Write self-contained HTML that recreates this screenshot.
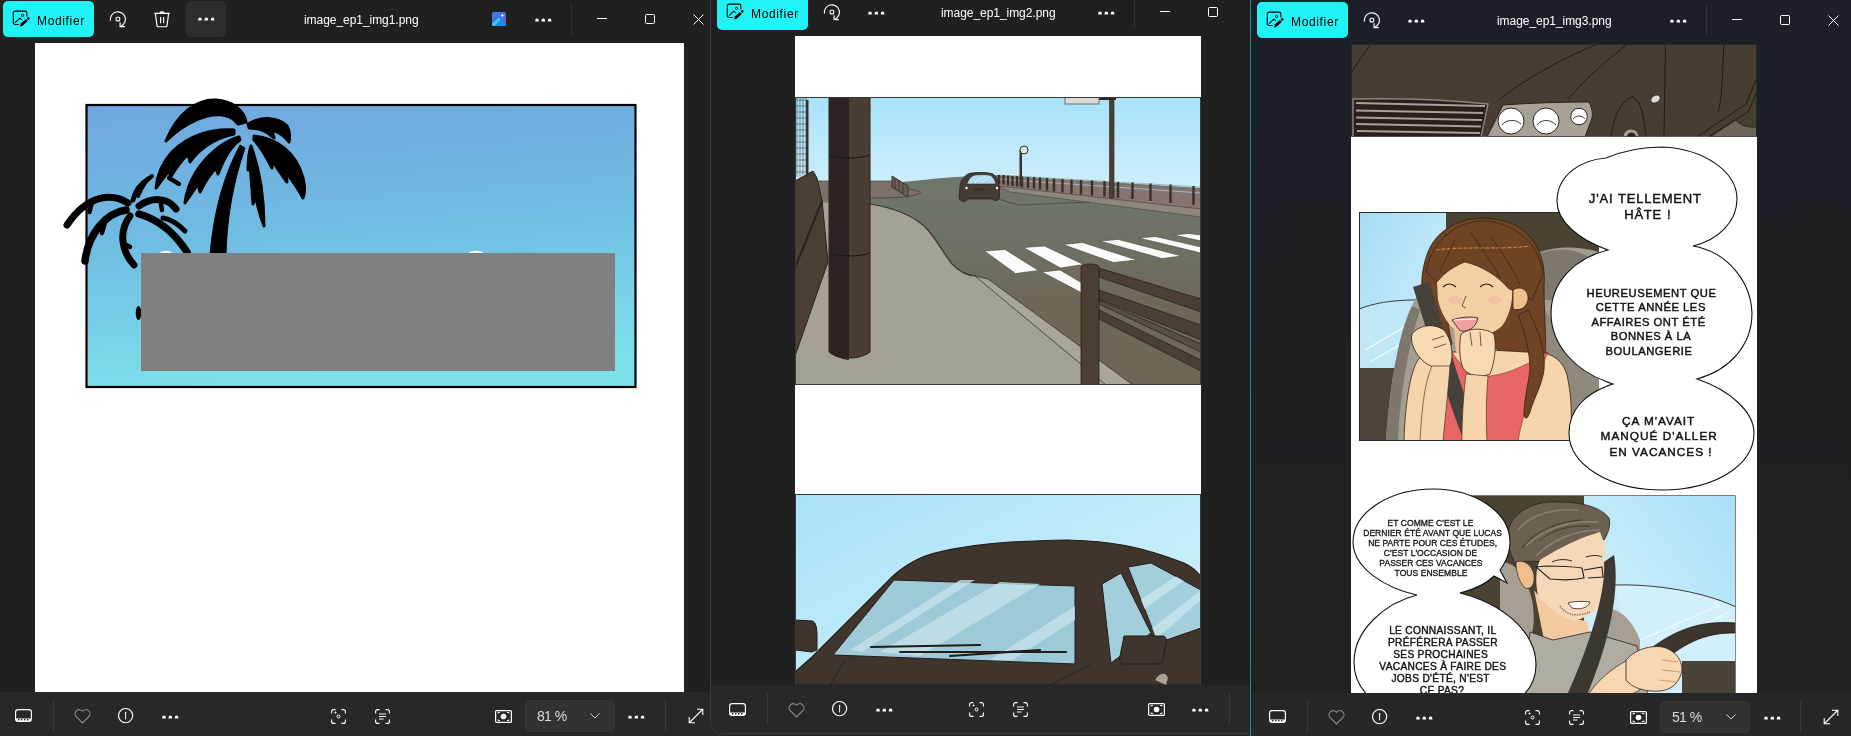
<!DOCTYPE html><html><head><meta charset="utf-8"><style>
html,body{margin:0;padding:0;width:1851px;height:736px;overflow:hidden;background:#202020;font-family:"Liberation Sans",sans-serif;-webkit-font-smoothing:antialiased}
.t{will-change:transform}
.a{position:absolute}
</style></head><body>
<div class="a" style="left:0;top:0;width:710px;height:736px;background:#202020"></div>
<div class="a" style="left:0;top:692px;width:1251px;height:44px;background:#282828"></div>
<div style="position:absolute;left:3px;top:1px;width:91px;height:36px;background:#20f2f6;border-radius:5px">
<svg style="position:absolute;left:9px;top:9px" width="18" height="18" viewBox="0 0 18 18"><path d="M6.8 14.5H3.1A1.8 1.8 0 0 1 1.3 12.7V2.9A1.8 1.8 0 0 1 3.1 1.1H13.1A1.8 1.8 0 0 1 14.9 2.9V6.6" fill="none" stroke="#000" stroke-width="1.1"/><circle cx="10.5" cy="5.4" r="1.1" fill="none" stroke="#000" stroke-width="1"/><path d="M3.1 12.6L7.8 8.2 9.8 9.6" fill="none" stroke="#000" stroke-width="1.1"/><path d="M8 16.7L9 13.3 14 9 15.8 10.8 11 15.5Z" fill="#000"/><path d="M14.7 8.3L15.5 7.5A1.2 1.2 0 0 1 17.2 9.2L16.4 10Z" fill="#000"/></svg>
<div class="t" style="position:absolute;left:33.8px;top:14px;height:12px;line-height:12px;font:12px/12px 'Liberation Sans',sans-serif;color:#000;letter-spacing:0.65px">Modifier</div></div>
<svg style="position:absolute;left:109px;top:11px" width="18" height="18" viewBox="0 0 18 18"><path d="M1.5 9.6A7.5 7.5 0 1 1 11.9 15.2" fill="none" stroke="#fff" stroke-width="1.15"/><path d="M11.1 11.2V15.6H15.8" fill="none" stroke="#fff" stroke-width="1.15"/><rect x="7.1" y="6.3" width="3.6" height="3.6" rx="1" fill="none" stroke="#fff" stroke-width="1.1"/></svg>
<svg style="position:absolute;left:153px;top:10px" width="18" height="18" viewBox="0 0 18 18"><path d="M1.2 3.4H16.8M6.8 3.2A1.6 1.4 0 0 1 8.4 1.8H9.6A1.6 1.4 0 0 1 11.2 3.2M2.4 3.6L4 15.6A1.2 1.2 0 0 0 5.2 16.7H12.8A1.2 1.2 0 0 0 14 15.6L15.6 3.6M7.6 6.9V13.2M10.6 6.9V13.2" fill="none" stroke="#fff" stroke-width="1.15"/></svg>
<div class="a" style="left:186px;top:1px;width:40px;height:36px;background:#2d2d2d;border-radius:5px"></div>
<svg style="position:absolute;left:198px;top:16.5px" width="17" height="5"><path d="M0.25 2.2a1.75 1.75 0 0 1 3.5 0V3.6H0.25zM6.55 2.2a1.75 1.75 0 0 1 3.5 0V3.6H6.55zM12.85 2.2a1.75 1.75 0 0 1 3.5 0V3.6H12.85z" fill="#fff"/></svg>
<div class="t" style="position:absolute;left:304px;top:13px;font:12px 'Liberation Sans',sans-serif;color:#fff;white-space:nowrap;letter-spacing:-0.05px">image_ep1_img1.png</div>
<svg style="position:absolute;left:492px;top:12px" width="14" height="14" viewBox="0 0 14 14"><defs><linearGradient id="pg492" x1="0" y1="0" x2="1" y2="1"><stop offset="0" stop-color="#2688ee"/><stop offset="0.55" stop-color="#4a6fdc"/><stop offset="1" stop-color="#8456d6"/></linearGradient><clipPath id="pc492"><rect width="14" height="14" rx="1.6"/></clipPath></defs><g clip-path="url(#pc492)"><rect width="14" height="14" fill="url(#pg492)"/><path d="M7 6L14 13V14H4Z" fill="#1590e6"/><path d="M-1 13L6.6 5.4 8.8 7.6 1.4 15Z" fill="#3ccaf8"/></g><path d="M10.3 1.6L10.9 3 12.4 3.5 10.9 4.1 10.3 5.5 9.7 4.1 8.3 3.5 9.7 3Z" fill="#fff"/></svg>
<svg style="position:absolute;left:535px;top:17.5px" width="17" height="5"><path d="M0.25 2.2a1.75 1.75 0 0 1 3.5 0V3.6H0.25zM6.55 2.2a1.75 1.75 0 0 1 3.5 0V3.6H6.55zM12.85 2.2a1.75 1.75 0 0 1 3.5 0V3.6H12.85z" fill="#fff"/></svg>
<div style="position:absolute;left:571px;top:3px;width:1px;height:32px;background:#333"></div>
<div style="position:absolute;left:597px;top:18px;width:10px;height:1px;background:#fff"></div><div style="position:absolute;left:645px;top:14px;width:8px;height:8px;border:1px solid #fff;border-radius:1.5px"></div><svg style="position:absolute;left:693px;top:14px" width="11" height="11" viewBox="0 0 11 11"><path d="M0.5 0.5l10 10M10.5 0.5l-10 10" stroke="#fff" stroke-width="1"/></svg>
<div class="a" id="img1" style="left:35px;top:43px;width:649px;height:649px;background:#fff;overflow:hidden"><svg width="649" height="649" viewBox="35 43 649 649" style="position:absolute;left:0;top:0">
<defs><linearGradient id="sky1" x1="0" y1="0" x2="0.15" y2="1"><stop offset="0" stop-color="#70a6de"/><stop offset="0.5" stop-color="#70bde3"/><stop offset="1" stop-color="#7ddfea"/></linearGradient></defs>
<rect x="86.5" y="105" width="549" height="282" fill="url(#sky1)" stroke="#000" stroke-width="2.2"/>
<g fill="#000" stroke="#000" stroke-linecap="round" stroke-linejoin="round">
<!-- big palm trunk -->
<path d="M210 254 C214 210 224 175 240 145 L245 148 C234 180 227 215 226 254 Z" stroke-width="1"/>
<!-- top frond crescent -->
<path d="M166 141 C178 112 198 99 216 100 C232 101 244 110 246 122 L238 124 C230 113 214 112 196 120 C184 125 174 133 166 141 Z" stroke-width="3"/>
<!-- right top frond -->
<path d="M248 124 C262 116 278 117 287 126 C290 131 290 137 289 142 C284 135 279 132 272 130 L274 138 C268 132 260 128 249 128 Z" stroke-width="3"/>
<!-- right long frond -->
<path d="M254 136 C276 138 296 152 303 178 C305 186 305 193 303 198 C298 188 292 180 286 172 L287 182 C281 174 276 166 272 160 L272 168 C266 156 260 146 254 140 Z" stroke-width="3"/>
<!-- right inner frond -->
<path d="M251 146 C258 165 264 190 264 226 C260 215 257 205 256 196 L253 204 C252 190 251 175 250 165 L248 170 C248 160 249 152 251 146 Z" stroke-width="3"/>
<!-- left long frond -->
<path d="M234 130 C212 128 188 136 172 152 C162 163 157 176 156 188 C162 180 166 174 170 170 L170 178 C176 168 182 160 188 154 L190 162 C198 150 214 138 234 134 Z" stroke-width="3"/>
<!-- left inner frond -->
<path d="M239 137 C222 142 206 156 196 172 C189 183 186 194 185 203 C190 196 194 190 198 184 L200 192 C206 180 212 172 216 168 L218 174 C224 158 231 146 240 140 Z" stroke-width="3"/>
<path d="M169 178 L179 184" stroke-width="4" fill="none"/>
<path d="M138 196 C142 186 146 180 152 176" stroke-width="4" fill="none"/>
<!-- small palm -->
</g><g fill="none" stroke="#000" stroke-linecap="round"><path d="M128 203C112 193 88 194 67 225" stroke-width="7"/><path d="M126 210C105 213 88 235 85 261" stroke-width="7.5"/><path d="M130 216C118 232 122 252 134 265" stroke-width="7"/><path d="M139 214C160 220 176 235 187 252" stroke-width="7.5"/><path d="M139 206C150 198 167 196 176 209" stroke-width="7"/><path d="M163 218C170 219 179 225 185 231" stroke-width="5"/><path d="M133 200C135 192 140 184 148 179" stroke-width="5"/><path d="M92 202L89.5 212" stroke-width="4.5"/><path d="M105 222L102 233" stroke-width="4.5"/><path d="M123 243L130 247" stroke-width="4.5"/><path d="M160 199L162 210" stroke-width="4.5"/></g><g fill="#000" stroke="#000" stroke-linecap="round" stroke-linejoin="round">
<path d="M169 178 L179 184" stroke-width="4" fill="none"/>
<ellipse cx="138.5" cy="313" rx="2.8" ry="7" stroke-width="0"/>
</g>
<ellipse cx="166" cy="253" rx="6" ry="2.2" fill="#fff"/>
<ellipse cx="476" cy="253" rx="7" ry="2.2" fill="#fff"/>
<rect x="141" y="253" width="474" height="118" fill="#808080"/>
</svg>
</div>
<svg style="position:absolute;left:15px;top:709px" width="17" height="13" viewBox="0 0 17 13"><rect x="0.6" y="0.6" width="15.8" height="11.8" rx="2.4" fill="none" stroke="#fff" stroke-width="1.15"/><path d="M0.6 9.6h15.8v1a1.8 1.8 0 0 1-1.8 1.8H2.4A1.8 1.8 0 0 1 0.6 10.6z" fill="#fff"/><rect x="3" y="10" width="1.5" height="1.4" fill="#282828"/><rect x="6" y="10" width="1.5" height="1.4" fill="#282828"/><rect x="9" y="10" width="1.5" height="1.4" fill="#282828"/><rect x="12" y="10" width="1.5" height="1.4" fill="#282828"/></svg>
<div style="position:absolute;left:53px;top:700px;width:1px;height:32px;background:#3a3a3a"></div>
<svg style="position:absolute;left:74px;top:709px" width="17" height="15" viewBox="0 0 17 15"><path d="M8.5 14L2 7.5A3.8 3.8 0 0 1 8.5 2.2 3.8 3.8 0 0 1 15 7.5z" fill="none" stroke="#8a8a8a" stroke-width="1.1"/></svg>
<svg style="position:absolute;left:118px;top:708px" width="16" height="16" viewBox="0 0 16 16"><circle cx="7.6" cy="7.6" r="7.1" fill="none" stroke="#fff" stroke-width="1.15"/><path d="M7.6 4.6v6.8" stroke="#fff" stroke-width="1"/><circle cx="7.6" cy="4.6" r="0.75" fill="#fff"/></svg>
<svg style="position:absolute;left:162px;top:714.5px" width="17" height="5"><path d="M0.25 2.2a1.75 1.75 0 0 1 3.5 0V3.6H0.25zM6.55 2.2a1.75 1.75 0 0 1 3.5 0V3.6H6.55zM12.85 2.2a1.75 1.75 0 0 1 3.5 0V3.6H12.85z" fill="#fff"/></svg>
<svg style="position:absolute;left:331px;top:709px" width="15" height="15" viewBox="0 0 15 15"><path d="M0.6 4.5V2.6a2 2 0 0 1 2-2h1.9M10.5 0.6h1.9a2 2 0 0 1 2 2v1.9M14.4 10.5v1.9a2 2 0 0 1-2 2h-1.9M4.5 14.4H2.6a2 2 0 0 1-2-2v-1.9" fill="none" stroke="#fff" stroke-width="1.1"/><circle cx="7.5" cy="7.5" r="1.5" fill="none" stroke="#fff" stroke-width="1"/><path d="M3.5 3.5h2M4.5 2.5v2" stroke="#fff" stroke-width="0.9"/></svg>
<svg style="position:absolute;left:375px;top:709px" width="15" height="15" viewBox="0 0 15 15"><path d="M0.6 4.5V2.6a2 2 0 0 1 2-2h1.9M10.5 0.6h1.9a2 2 0 0 1 2 2v1.9M14.4 10.5v1.9a2 2 0 0 1-2 2h-1.9M4.5 14.4H2.6a2 2 0 0 1-2-2v-1.9" fill="none" stroke="#fff" stroke-width="1.1"/><path d="M4 5h7M4 7.5h7M4 10h4.5" stroke="#fff" stroke-width="1"/></svg>
<svg style="position:absolute;left:495px;top:710px" width="17" height="13" viewBox="0 0 17 13"><rect x="0.6" y="0.6" width="15.8" height="11.8" rx="1" fill="none" stroke="#fff" stroke-width="1.2"/><path d="M3 3.5v-1h2M12 2.5h2v1M14 9.5v1h-2M5 10.5H3v-1" fill="none" stroke="#fff" stroke-width="0.9"/><circle cx="8.5" cy="6.5" r="2.8" fill="#fff"/></svg>
<div style="position:absolute;left:525px;top:700px;width:88px;height:30px;background:#323232;border:1px solid #383838;border-radius:5px">
<div class="t" style="position:absolute;left:11px;top:7px;font:14px 'Liberation Sans',sans-serif;color:#dcdcdc;letter-spacing:-0.9px;word-spacing:1px;white-space:nowrap">81 %</div></div>
<svg style="position:absolute;left:590px;top:713px" width="10" height="6" viewBox="0 0 10 6"><path d="M0.5 0.5l4.5 4.5 4.5-4.5" fill="none" stroke="#cfcfcf" stroke-width="1"/></svg>
<svg style="position:absolute;left:628px;top:714.5px" width="17" height="5"><path d="M0.25 2.2a1.75 1.75 0 0 1 3.5 0V3.6H0.25zM6.55 2.2a1.75 1.75 0 0 1 3.5 0V3.6H6.55zM12.85 2.2a1.75 1.75 0 0 1 3.5 0V3.6H12.85z" fill="#fff"/></svg>
<div style="position:absolute;left:665px;top:699px;width:1px;height:33px;background:#3a3a3a"></div>
<svg style="position:absolute;left:688px;top:708px" width="16" height="16" viewBox="0 0 16 16"><path d="M1.5 14.5l13-13M9 1.2h5.8V7M1.2 9v5.8H7" fill="none" stroke="#fff" stroke-width="1.1"/></svg>
<div class="a" style="left:710px;top:-10px;width:560px;height:743px;background:#202020;border-left:1px solid #3a3a3a;border-bottom:1px solid #3a3a3a;border-radius:0 0 0 12px;overflow:hidden">
<div class="a" style="left:0;top:695px;width:560px;height:49px;background:#282828"></div>
</div>
<div style="position:absolute;left:717px;top:-6px;width:91px;height:36px;background:#20f2f6;border-radius:5px">
<svg style="position:absolute;left:9px;top:9px" width="18" height="18" viewBox="0 0 18 18"><path d="M6.8 14.5H3.1A1.8 1.8 0 0 1 1.3 12.7V2.9A1.8 1.8 0 0 1 3.1 1.1H13.1A1.8 1.8 0 0 1 14.9 2.9V6.6" fill="none" stroke="#000" stroke-width="1.1"/><circle cx="10.5" cy="5.4" r="1.1" fill="none" stroke="#000" stroke-width="1"/><path d="M3.1 12.6L7.8 8.2 9.8 9.6" fill="none" stroke="#000" stroke-width="1.1"/><path d="M8 16.7L9 13.3 14 9 15.8 10.8 11 15.5Z" fill="#000"/><path d="M14.7 8.3L15.5 7.5A1.2 1.2 0 0 1 17.2 9.2L16.4 10Z" fill="#000"/></svg>
<div class="t" style="position:absolute;left:33.8px;top:14px;height:12px;line-height:12px;font:12px/12px 'Liberation Sans',sans-serif;color:#000;letter-spacing:0.65px">Modifier</div></div>
<svg style="position:absolute;left:823px;top:4px" width="18" height="18" viewBox="0 0 18 18"><path d="M1.5 9.6A7.5 7.5 0 1 1 11.9 15.2" fill="none" stroke="#fff" stroke-width="1.15"/><path d="M11.1 11.2V15.6H15.8" fill="none" stroke="#fff" stroke-width="1.15"/><rect x="7.1" y="6.3" width="3.6" height="3.6" rx="1" fill="none" stroke="#fff" stroke-width="1.1"/></svg>
<svg style="position:absolute;left:868px;top:10.5px" width="17" height="5"><path d="M0.25 2.2a1.75 1.75 0 0 1 3.5 0V3.6H0.25zM6.55 2.2a1.75 1.75 0 0 1 3.5 0V3.6H6.55zM12.85 2.2a1.75 1.75 0 0 1 3.5 0V3.6H12.85z" fill="#fff"/></svg>
<div class="t" style="position:absolute;left:941px;top:6px;font:12px 'Liberation Sans',sans-serif;color:#fff;white-space:nowrap;letter-spacing:-0.05px">image_ep1_img2.png</div>
<svg style="position:absolute;left:1098px;top:10.5px" width="17" height="5"><path d="M0.25 2.2a1.75 1.75 0 0 1 3.5 0V3.6H0.25zM6.55 2.2a1.75 1.75 0 0 1 3.5 0V3.6H6.55zM12.85 2.2a1.75 1.75 0 0 1 3.5 0V3.6H12.85z" fill="#fff"/></svg>
<div style="position:absolute;left:1134px;top:0px;width:1px;height:28px;background:#333"></div>
<div style="position:absolute;left:1160px;top:11px;width:10px;height:1px;background:#fff"></div><div style="position:absolute;left:1208px;top:7px;width:8px;height:8px;border:1px solid #fff;border-radius:1.5px"></div>
<div class="a" id="img2" style="left:795px;top:36px;width:406px;height:649px;background:#fff;overflow:hidden"><svg width="406" height="649" viewBox="795 36 406 649" style="position:absolute;left:0;top:0">
<defs>
<linearGradient id="sky2" gradientUnits="userSpaceOnUse" x1="0" y1="97" x2="0" y2="185"><stop offset="0" stop-color="#a8e2fb"/><stop offset="1" stop-color="#cdeefa"/></linearGradient>
<linearGradient id="road2" gradientUnits="userSpaceOnUse" x1="0" y1="176" x2="0" y2="385"><stop offset="0" stop-color="#6f776d"/><stop offset="0.35" stop-color="#6f7064"/><stop offset="0.6" stop-color="#6e6858"/><stop offset="1" stop-color="#6f6655"/></linearGradient>
<linearGradient id="sky3" x1="0" y1="0" x2="1" y2="1"><stop offset="0" stop-color="#a9e2f8"/><stop offset="1" stop-color="#d6f3fb"/></linearGradient>
<clipPath id="p1"><rect x="795" y="97" width="406" height="288"/></clipPath>
<clipPath id="p2"><rect x="795" y="494" width="406" height="191"/></clipPath>
</defs>
<g clip-path="url(#p1)">
<rect x="795" y="97" width="406" height="288" fill="url(#sky2)"/>
<!-- road -->
<path d="M800 196 C900 180 960 176 1000 175 L1201 188 L1201 385 L795 385 Z" fill="url(#road2)"/>
<!-- barrier wall -->
<path d="M998 176 L1201 190 L1201 209 L998 186 Z" fill="#857470"/>
<path d="M998 186 L1201 209 L1201 217 L1010 192 Z" fill="#8e887c" stroke="#4a4038" stroke-width="0.6"/>
<path d="M998 175 L1201 187 M998 179 L1201 193" stroke="#9fb8c0" stroke-width="1.2"/>
<g stroke="#3a302a" stroke-width="2.4">
<path d="M999 175v9M1003.5 175v9.5M1008 175.5v10M1012.5 176v10M1017 176v10.5M1022 176.5v11M1028 177v11M1034 177v11.5M1040 177.5v12M1047 178v12.5M1054 178.5v13M1062.5 179v13.5M1071.5 179.5v14M1081 180v14.5M1092 180.5v15M1104.5 181v15.5M1118 182v16M1132.5 182.5v16.5M1150.5 183.5v17.5M1170.5 184.5v18.5M1193.5 186v19"/>
</g>
<path d="M998 199 L1019 205 L1090 202" fill="none" stroke="#4a463c" stroke-width="0.8"/>
<!-- tall pole & sign -->
<rect x="1109.5" y="97" width="4.5" height="101" fill="#4a3e34" stroke="#2a221e" stroke-width="0.6"/>
<rect x="1099" y="97" width="17" height="3" fill="#2e2622"/>
<rect x="1065" y="97" width="34" height="7" fill="#dcdad6" stroke="#5a524a" stroke-width="0.8"/>
<!-- lamp -->
<rect x="1019.5" y="150" width="2.5" height="36" fill="#3a302a"/>
<circle cx="1024" cy="150" r="4" fill="#e6e4e0" stroke="#3a302a" stroke-width="1"/>
<!-- distant car -->
<path d="M959 197 L960 186 C961 180 964 176 969 173.5 C976 172 988 172 993 174 C997 177 999 182 999.5 188 L999.5 198 C998 201 994 201 992 199 L968 199 C966 202 962 202 960 200 Z" fill="#463c33" stroke="#2a221e" stroke-width="0.8"/>
<path d="M967 184 C968 180 971 176 975 175 C982 174.5 988 174.5 991 175.5 C994 178 995 181 996 184 Z" fill="#aedcf0" stroke="#2a221e" stroke-width="0.6"/>
<path d="M975 182 L986 176 M980 183 L990 177" stroke="#e6f6fc" stroke-width="0.8"/>
<circle cx="966.5" cy="188" r="1.2" fill="#fff"/><circle cx="997" cy="188" r="1.2" fill="#fff"/>
<rect x="974" y="188" width="10" height="3" fill="#3a302a"/>
<!-- pink platform left -->
<path d="M816 181 L893 181 L906 188 L921 192 C916 197 900 198 870 198 L870 205 L816 203 Z" fill="#7d6f6a" stroke="#3a302a" stroke-width="0.6"/>
<path d="M892 176 L908 186 L908 197 L892 187 Z" fill="#6a5e58" stroke="#3a302a" stroke-width="1"/><path d="M895 178v10M899 180.5v10M903 183v10" stroke="#3a302a" stroke-width="0.8"/>
<!-- sidewalk -->
<path d="M816 202 L870 204 C895 208 915 216 928 230 C938 242 944 254 952 264 C962 274 970 276 976 276 L1106 385 L795 385 L795 202 Z" fill="#a5a195"/>
<path d="M870 204 C895 208 915 216 928 230 C938 242 944 254 952 264 C962 274 970 276 976 276" fill="none" stroke="#3a322c" stroke-width="1.2"/>
<path d="M975 276 L1106 385 L1133 385 L988 279 Z" fill="#a9a598" stroke="#3a322c" stroke-width="0.8"/>
<!-- zebra -->
<g fill="#fbfbfb" stroke="#4a463c" stroke-width="0.6">
<path d="M984.5 251 L1005 249.5 L1038.5 270.5 L1015.5 273.5 Z"/>
<path d="M1023.5 247.5 L1044.5 246 L1083.5 264.5 L1060.5 268 Z"/>
<path d="M1063 244.5 L1082.5 242.5 L1137 260 L1113.5 262.5 Z"/>
<path d="M1100 241 L1118.5 239.5 L1182 256 L1162 258.5 Z"/>
<path d="M1139 238 L1155.5 236.5 L1201 247 L1201 253 Z"/>
<path d="M1174 235 L1188 233.5 L1201 235 L1201 241 Z"/>
<path d="M1042 272 L1060 270 L1082 283 L1082 293 Z"/>
</g>
<!-- left wall & fence -->
<path d="M795 181 L813 171 L817 178 L822 200 L828 262 L795 356 Z" fill="#4b3f33" stroke="#2a221e" stroke-width="1"/>
<path d="M795 268 L822 201" stroke="#2a221e" stroke-width="2"/>
<g stroke="#3e4a4a" stroke-width="0.6">
<path d="M795 100h12M795 106h12M795 112h12M795 118h12M795 124h12M795 130h12M795 136h12M795 142h12M795 148h12M795 154h12M795 160h12M795 166h12M795 172h12"/>
<path d="M797 97v80M800 97v80M803 97v78M806 97v77"/>
</g>
<rect x="806" y="100" width="2.5" height="76" fill="#3a302a"/>
<!-- pillar -->
<path d="M829 97 L870 97 L870 352 C860 360 838 360 829 352 Z" fill="#4a3d32" stroke="#2a221e" stroke-width="1"/>
<path d="M829 97 L849 97 L849 360 C840 359 834 356 829 352 Z" fill="#2e2320"/>
<path d="M829 155 C840 159 860 159 870 155 M829 253 C840 257 860 257 870 253" fill="none" stroke="#1e1614" stroke-width="1"/>
<!-- guard rail -->
<g stroke="#2a221e" stroke-width="0.8" fill="#4b3f33">
<path d="M1099 268 L1201 299 L1201 312 L1099 277 Z"/>
<path d="M1099 290 L1201 325 L1201 340 L1099 299 Z"/>
<path d="M1099 300 L1201 344 L1201 352 L1099 304 Z" fill="#5a4e42"/>
<path d="M1099 310 L1201 360 L1201 371 L1099 319 Z"/>
<path d="M1081 267 C1081 263 1099 263 1099 267 L1099 385 L1081 385 Z"/>
</g>
<rect x="795.5" y="97.5" width="405" height="287" fill="none" stroke="#3a3a3a" stroke-width="1"/>
</g>
<g clip-path="url(#p2)">
<rect x="795" y="494" width="406" height="191" fill="url(#sky3)"/>
<path d="M795 685 L795 672 L812 657 L893 576 C905 565 915 560 925 556 C950 548 990 541 1067 540 C1110 541 1140 546 1184 563 C1192 567 1198 572 1201 577 L1201 685 Z" fill="#3f352d" stroke="#231c18" stroke-width="1.2"/>
<path d="M833 655 L894 580 L1075 586 L1075 664 Z" fill="#9ec9d8" stroke="#231c18" stroke-width="1"/>
<g clip-path="url(#p2)"><path d="M850 650 L960 580 L975 580 L862 652 Z M880 652 L1000 582 L1040 584 L920 656 Z M990 660 L1075 606 L1075 620 L1012 660 Z" fill="#c4e2ea" opacity="0.8"/></g>
<path d="M1102 584 L1121 573 L1151 633 L1111 663 Z" fill="#a3cfdd" stroke="#231c18" stroke-width="1"/>
<path d="M1128 567 L1151 563 L1201 590 L1201 628 L1158 643 Z" fill="#a3cfdd" stroke="#231c18" stroke-width="1"/>
<clipPath id="rw"><path d="M1128 567 L1151 563 L1201 590 L1201 628 L1158 643 Z"/></clipPath><path clip-path="url(#rw)" d="M1140 600 L1201 560 L1201 568 L1143 610 Z M1150 630 L1201 590 L1201 600 L1155 640 Z" fill="#c8e5ee" opacity="0.8"/>
<path d="M1124 636 L1163 636 C1166 636 1167 640 1166 644 L1163 660 C1162 663 1160 664 1156 664 L1124 664 C1120 664 1119 660 1120 656 Z" fill="#3f352d" stroke="#231c18" stroke-width="1"/>
<path d="M795 620 L812 621 C816 622 817 628 817 636 L817 650 L812 652 L795 650 Z" fill="#3f352d" stroke="#231c18" stroke-width="1"/>
<path d="M871 647 L980 645 M900 652 L1066 652 M950 656 L1040 650" stroke="#231c18" stroke-width="2.2" stroke-linecap="round"/>
<path d="M830 685 L845 660 M1050 685 L1090 665" stroke="#231c18" stroke-width="0.8"/>
<path d="M1155 680 C1160 672 1166 672 1168 678 L1166 685 Z" fill="#a8a396"/>
<rect x="795.5" y="494.5" width="405" height="195" fill="none" stroke="#3a3a3a" stroke-width="1"/>
</g>
</svg>
</div>
<svg style="position:absolute;left:729px;top:703px" width="17" height="13" viewBox="0 0 17 13"><rect x="0.6" y="0.6" width="15.8" height="11.8" rx="2.4" fill="none" stroke="#fff" stroke-width="1.15"/><path d="M0.6 9.6h15.8v1a1.8 1.8 0 0 1-1.8 1.8H2.4A1.8 1.8 0 0 1 0.6 10.6z" fill="#fff"/><rect x="3" y="10" width="1.5" height="1.4" fill="#282828"/><rect x="6" y="10" width="1.5" height="1.4" fill="#282828"/><rect x="9" y="10" width="1.5" height="1.4" fill="#282828"/><rect x="12" y="10" width="1.5" height="1.4" fill="#282828"/></svg>
<div style="position:absolute;left:767px;top:693px;width:1px;height:32px;background:#3a3a3a"></div>
<svg style="position:absolute;left:788px;top:703px" width="17" height="15" viewBox="0 0 17 15"><path d="M8.5 14L2 7.5A3.8 3.8 0 0 1 8.5 2.2 3.8 3.8 0 0 1 15 7.5z" fill="none" stroke="#8a8a8a" stroke-width="1.1"/></svg>
<svg style="position:absolute;left:832px;top:701px" width="16" height="16" viewBox="0 0 16 16"><circle cx="7.6" cy="7.6" r="7.1" fill="none" stroke="#fff" stroke-width="1.15"/><path d="M7.6 4.6v6.8" stroke="#fff" stroke-width="1"/><circle cx="7.6" cy="4.6" r="0.75" fill="#fff"/></svg>
<svg style="position:absolute;left:876px;top:707.5px" width="17" height="5"><path d="M0.25 2.2a1.75 1.75 0 0 1 3.5 0V3.6H0.25zM6.55 2.2a1.75 1.75 0 0 1 3.5 0V3.6H6.55zM12.85 2.2a1.75 1.75 0 0 1 3.5 0V3.6H12.85z" fill="#fff"/></svg>
<svg style="position:absolute;left:969px;top:702px" width="15" height="15" viewBox="0 0 15 15"><path d="M0.6 4.5V2.6a2 2 0 0 1 2-2h1.9M10.5 0.6h1.9a2 2 0 0 1 2 2v1.9M14.4 10.5v1.9a2 2 0 0 1-2 2h-1.9M4.5 14.4H2.6a2 2 0 0 1-2-2v-1.9" fill="none" stroke="#fff" stroke-width="1.1"/><circle cx="7.5" cy="7.5" r="1.5" fill="none" stroke="#fff" stroke-width="1"/><path d="M3.5 3.5h2M4.5 2.5v2" stroke="#fff" stroke-width="0.9"/></svg>
<svg style="position:absolute;left:1013px;top:702px" width="15" height="15" viewBox="0 0 15 15"><path d="M0.6 4.5V2.6a2 2 0 0 1 2-2h1.9M10.5 0.6h1.9a2 2 0 0 1 2 2v1.9M14.4 10.5v1.9a2 2 0 0 1-2 2h-1.9M4.5 14.4H2.6a2 2 0 0 1-2-2v-1.9" fill="none" stroke="#fff" stroke-width="1.1"/><path d="M4 5h7M4 7.5h7M4 10h4.5" stroke="#fff" stroke-width="1"/></svg>
<svg style="position:absolute;left:1148px;top:703px" width="17" height="13" viewBox="0 0 17 13"><rect x="0.6" y="0.6" width="15.8" height="11.8" rx="1" fill="none" stroke="#fff" stroke-width="1.2"/><path d="M3 3.5v-1h2M12 2.5h2v1M14 9.5v1h-2M5 10.5H3v-1" fill="none" stroke="#fff" stroke-width="0.9"/><circle cx="8.5" cy="6.5" r="2.8" fill="#fff"/></svg>
<svg style="position:absolute;left:1192px;top:707.5px" width="17" height="5"><path d="M0.25 2.2a1.75 1.75 0 0 1 3.5 0V3.6H0.25zM6.55 2.2a1.75 1.75 0 0 1 3.5 0V3.6H6.55zM12.85 2.2a1.75 1.75 0 0 1 3.5 0V3.6H12.85z" fill="#fff"/></svg>
<div style="position:absolute;left:1229px;top:693px;width:1px;height:32px;background:#3a3a3a"></div>
<div class="a" style="left:1250px;top:0;width:601px;height:736px;background:linear-gradient(180deg,#1b1f27 0%,#1c2025 35%,#1e2222 70%,#22231f 100%);border-left:1px solid #13909a"></div>
<div class="a" style="left:1251px;top:693px;width:600px;height:43px;background:#252826"></div>
<div style="position:absolute;left:1257px;top:2px;width:91px;height:36px;background:#20f2f6;border-radius:5px">
<svg style="position:absolute;left:9px;top:9px" width="18" height="18" viewBox="0 0 18 18"><path d="M6.8 14.5H3.1A1.8 1.8 0 0 1 1.3 12.7V2.9A1.8 1.8 0 0 1 3.1 1.1H13.1A1.8 1.8 0 0 1 14.9 2.9V6.6" fill="none" stroke="#000" stroke-width="1.1"/><circle cx="10.5" cy="5.4" r="1.1" fill="none" stroke="#000" stroke-width="1"/><path d="M3.1 12.6L7.8 8.2 9.8 9.6" fill="none" stroke="#000" stroke-width="1.1"/><path d="M8 16.7L9 13.3 14 9 15.8 10.8 11 15.5Z" fill="#000"/><path d="M14.7 8.3L15.5 7.5A1.2 1.2 0 0 1 17.2 9.2L16.4 10Z" fill="#000"/></svg>
<div class="t" style="position:absolute;left:33.8px;top:14px;height:12px;line-height:12px;font:12px/12px 'Liberation Sans',sans-serif;color:#000;letter-spacing:0.65px">Modifier</div></div>
<svg style="position:absolute;left:1363px;top:12px" width="18" height="18" viewBox="0 0 18 18"><path d="M1.5 9.6A7.5 7.5 0 1 1 11.9 15.2" fill="none" stroke="#fff" stroke-width="1.15"/><path d="M11.1 11.2V15.6H15.8" fill="none" stroke="#fff" stroke-width="1.15"/><rect x="7.1" y="6.3" width="3.6" height="3.6" rx="1" fill="none" stroke="#fff" stroke-width="1.1"/></svg>
<svg style="position:absolute;left:1408px;top:18.5px" width="17" height="5"><path d="M0.25 2.2a1.75 1.75 0 0 1 3.5 0V3.6H0.25zM6.55 2.2a1.75 1.75 0 0 1 3.5 0V3.6H6.55zM12.85 2.2a1.75 1.75 0 0 1 3.5 0V3.6H12.85z" fill="#fff"/></svg>
<div class="t" style="position:absolute;left:1497px;top:14px;font:12px 'Liberation Sans',sans-serif;color:#fff;white-space:nowrap;letter-spacing:-0.05px">image_ep1_img3.png</div>
<svg style="position:absolute;left:1670px;top:18.5px" width="17" height="5"><path d="M0.25 2.2a1.75 1.75 0 0 1 3.5 0V3.6H0.25zM6.55 2.2a1.75 1.75 0 0 1 3.5 0V3.6H6.55zM12.85 2.2a1.75 1.75 0 0 1 3.5 0V3.6H12.85z" fill="#fff"/></svg>
<div style="position:absolute;left:1706px;top:5px;width:1px;height:30px;background:#333"></div>
<div style="position:absolute;left:1732px;top:19px;width:10px;height:1px;background:#fff"></div><div style="position:absolute;left:1780px;top:15px;width:8px;height:8px;border:1px solid #fff;border-radius:1.5px"></div><svg style="position:absolute;left:1828px;top:15px" width="11" height="11" viewBox="0 0 11 11"><path d="M0.5 0.5l10 10M10.5 0.5l-10 10" stroke="#fff" stroke-width="1"/></svg>
<div class="a" id="img3" style="left:1351px;top:44px;width:406px;height:649px;background:#fff;overflow:hidden"><svg width="406" height="649" viewBox="1351 44 406 649" style="position:absolute;left:0;top:0;will-change:transform">
<defs>
<linearGradient id="s3a" x1="0" y1="0" x2="1" y2="1"><stop offset="0" stop-color="#a4dcf6"/><stop offset="1" stop-color="#d2f1fb"/></linearGradient>
<linearGradient id="s3b" x1="1" y1="0" x2="0" y2="1"><stop offset="0" stop-color="#a8e0f8"/><stop offset="1" stop-color="#d8f3fb"/></linearGradient>
<clipPath id="c31"><rect x="1351" y="44" width="406" height="92.5"/></clipPath>
<clipPath id="c32"><rect x="1359" y="212" width="240" height="229"/></clipPath>
<clipPath id="c33"><rect x="1440" y="495.5" width="295.5" height="200"/></clipPath>
</defs>
<!-- panel 1 car front -->
<g clip-path="url(#c31)">
<rect x="1351" y="44" width="406" height="93" fill="#463d33"/>
<path d="M1353 99 C1400 98 1450 100 1488 104 L1481 137 L1353 137 Z" fill="#2a1f1c" stroke="#8d8578" stroke-width="1.4"/>
<g stroke="#a9a195" stroke-width="2"><path d="M1356 103L1485 106M1356 110.5L1483 113M1356 117.5L1482 120M1356 124L1481 126.5M1357 131L1480 133"/></g>
<path d="M1487 137 L1503 105 C1530 103 1560 102 1589 102 C1592 108 1593 114 1592 118 L1585 137 Z" fill="#a8a295" stroke="#2a221e" stroke-width="1"/>
<circle cx="1511" cy="121" r="13" fill="#fff" stroke="#2a221e" stroke-width="1"/>
<circle cx="1546" cy="121" r="13" fill="#fff" stroke="#2a221e" stroke-width="1"/>
<circle cx="1579" cy="116.5" r="8.3" fill="#fff" stroke="#2a221e" stroke-width="1"/>
<path d="M1502 125 C1506 119 1516 119 1521 124 M1537 125 C1541 119 1551 119 1556 125 M1573 119 C1576 115 1582 115 1585 119" fill="none" stroke="#2a221e" stroke-width="0.9"/>
<g fill="none" stroke="#1e1814" stroke-width="0.9">
<path d="M1500 99 C1530 75 1570 55 1598 44"/>
<path d="M1568 99 C1580 85 1600 65 1628 44"/>
<path d="M1351 73 C1358 62 1365 52 1371 44"/>
<path d="M1611 137 C1614 115 1622 100 1632 97 C1640 98 1644 115 1646 137"/>
<path d="M1665.5 44 L1664 137 M1724 44 C1722 80 1722 100 1718 112"/>
<path d="M1697 137 L1746 104 L1756 80 M1708 137 L1748 112 L1757 92"/>
</g>
<path d="M1623 137 A8 8 0 0 1 1639 137 Z" fill="#a8a295" stroke="#1e1814" stroke-width="0.6"/><path d="M1627 137 A4.5 4.5 0 0 1 1636 137 Z" fill="#2a221e"/>
<ellipse cx="1655.5" cy="99" rx="5" ry="3.5" fill="#dedbd4" stroke="#222" stroke-width="0.7" transform="rotate(-30 1655.5 99)"/>
<path d="M1710 137 L1736 120 C1740 126 1748 128 1757 127 L1757 137 Z" fill="#6e6658" stroke="#1e1814" stroke-width="0.6"/>
<rect x="1351.5" y="44.5" width="405" height="92" fill="none" stroke="#2a2a2a" stroke-width="1"/>
</g>
<!-- panel 2 woman -->
<g clip-path="url(#c32)">
<rect x="1359" y="212" width="240" height="229" fill="#4a4233"/>
<rect x="1359" y="212" width="87" height="156" fill="url(#s3a)"/>
<path d="M1359 309 C1380 301 1400 299 1420 299.5 L1446 300 L1446 368 L1359 368 Z" fill="#bfe8f7"/>
<path d="M1359 309 C1380 301 1400 299 1446 300" fill="none" stroke="#3a3a3a" stroke-width="1"/>
<path d="M1365 350 L1420 318 M1370 362 L1440 322" stroke="#e6f7fd" stroke-width="1.5"/>
<rect x="1359" y="368" width="40" height="73" fill="#4b4538"/>
<!-- seat -->
<path d="M1386 441 C1390 380 1400 330 1412 306 C1418 290 1425 282 1440 280 L1540 252 C1556 246 1580 246 1599 252 L1599 441 Z" fill="#a39e92"/><path d="M1538 254 C1556 247 1576 248 1590 258 L1590 300 L1545 300 Z" fill="#7f796d"/>
<path d="M1386 441 C1390 380 1400 330 1412 306 L1420 310 C1410 340 1400 390 1398 441 Z" fill="#7d776c"/>
<path d="M1540 300 C1555 330 1575 360 1599 380 L1599 441 L1560 441 Z" fill="#8f897d"/>
<!-- hair back -->
<path d="M1479 218 C1455 220 1436 232 1428 252 C1420 272 1420 295 1426 315 C1430 330 1436 342 1444 350 L1452 344 C1446 320 1446 300 1450 285 L1500 285 L1492 345 C1505 356 1530 362 1546 362 C1546 340 1544 310 1544 285 C1546 262 1538 240 1520 228 C1510 221 1495 218 1479 218 Z" fill="#6e4424" stroke="#3a2010" stroke-width="0.9"/>
<!-- body skin -->
<path d="M1404 441 C1405 405 1410 372 1418 360 C1426 350 1440 348 1452 352 L1455 352 L1490 350 L1544 353 C1558 356 1566 366 1568 380 C1572 400 1572 420 1570 441 Z" fill="#f6d5ad" stroke="#3a2010" stroke-width="0.8"/>
<!-- pink top -->
<path d="M1443 441 C1444 410 1447 375 1452 352 C1460 366 1474 376 1490 376 C1510 374 1532 362 1548 352 C1540 370 1533 388 1528 402 C1523 417 1520 430 1518 441 Z" fill="#e96666" stroke="#8a2a2a" stroke-width="0.6"/>
<!-- neck -->
<path d="M1454 330 L1490 330 L1492 352 C1480 360 1466 360 1456 352 Z" fill="#eebf92"/>
<!-- right hair strand -->
<path d="M1528 310 C1538 330 1546 350 1544 370 C1542 385 1534 398 1530 412 C1528 418 1526 420 1524 416 C1524 400 1528 385 1530 370 C1530 350 1524 330 1518 315 Z" fill="#6e4424" stroke="#3a2010" stroke-width="0.8"/>
<!-- face -->
<path d="M1436 265 C1450 258 1490 258 1510 272 C1515 292 1512 312 1502 326 C1492 335 1478 338 1466 336 C1452 331 1442 318 1438 300 Z" fill="#f3cfa4"/>
<ellipse cx="1455" cy="300" rx="7" ry="4" fill="#f0b8a0" opacity="0.6"/>
<ellipse cx="1495" cy="300" rx="7" ry="4" fill="#f0b8a0" opacity="0.6"/>

<path d="M1452 320 C1460 317 1472 316 1478 318 C1476 328 1468 332 1460 331 Z" fill="#f3a0a0" stroke="#3a1a10" stroke-width="0.8"/>
<path d="M1454 320 L1476 319" stroke="#fff" stroke-width="1.2"/>
<path d="M1443 287 C1447 283 1452 283 1456 287 M1480 287 C1484 283 1489 283 1493 287" fill="none" stroke="#3a2010" stroke-width="1.2"/>
<path d="M1466 296 L1462 306 L1466 308" fill="none" stroke="#3a2010" stroke-width="0.7"/>
<!-- fringe -->
<path d="M1426 272 C1432 238 1460 219 1488 221 C1518 225 1540 246 1543 274 L1532 300 C1526 296 1518 291 1509 289 C1498 276 1482 266 1465 262 C1455 266 1446 271 1437 282 Z" fill="#6e4424" stroke="#3a2010" stroke-width="0.7"/>
<path d="M1436 250 C1462 246 1500 250 1530 246" fill="none" stroke="#c8803e" stroke-width="1.2" stroke-dasharray="4 1.5"/>
<path d="M1470 232 C1480 245 1492 262 1500 278 M1490 236 C1500 250 1512 266 1520 285 M1455 240 C1450 250 1444 262 1440 272" fill="none" stroke="#3a2010" stroke-width="0.7"/>
<path d="M1513 290 C1521 285 1529 290 1528 300 C1526 308 1520 311 1513 309 Z" fill="#f0c08f" stroke="#3a2010" stroke-width="0.8"/>
<!-- seatbelt -->
<path d="M1413 287 L1429 282 C1441 320 1458 380 1481 441 L1464 441 C1444 390 1427 330 1413 287 Z" fill="#46413b"/>
<!-- hands -->
<path d="M1412 334 C1418 326 1432 322 1444 330 C1452 340 1454 356 1450 366 C1442 370 1430 368 1422 360 C1414 352 1410 342 1412 334 Z" fill="#f7d9b2" stroke="#3a2010" stroke-width="0.8"/>
<path d="M1420 441 C1422 405 1425 382 1432 366 L1450 366 C1448 392 1445 420 1443 441 Z" fill="#f6d5ad" stroke="#3a2010" stroke-width="0.6"/>
<path d="M1461 334 C1470 327 1486 328 1494 334 C1497 348 1494 364 1490 374 C1480 378 1468 376 1463 368 C1459 358 1459 346 1461 334 Z" fill="#f7d9b2" stroke="#3a2010" stroke-width="0.8"/>
<path d="M1462 441 C1462 412 1464 392 1466 374 L1488 376 C1486 400 1486 420 1487 441 Z" fill="#f6d5ad" stroke="#3a2010" stroke-width="0.6"/>
<path d="M1444 336 L1432 340 M1446 344 L1434 348 M1470 332 L1472 346 M1480 332 L1481 346" stroke="#3a2010" stroke-width="0.7"/>
<rect x="1359.5" y="212.5" width="260" height="228" fill="none" stroke="#2a2a2a" stroke-width="1"/>
</g>
<!-- panel 3 man -->
<g clip-path="url(#c33)">
<rect x="1440" y="495.5" width="296" height="200" fill="#4a4233"/>
<rect x="1584" y="495.5" width="152" height="200" fill="url(#s3b)"/>
<path d="M1615 585 C1650 584 1700 590 1736 607 L1736 695 L1640 695 Z" fill="#d2f0fa"/>
<path d="M1615 585 C1650 584 1700 590 1736 607" fill="none" stroke="#3a3a3a" stroke-width="1"/>
<path d="M1640 640 L1720 605 M1650 650 L1730 612" stroke="#eefafe" stroke-width="1.2"/>
<path d="M1682 661 L1736 661 L1736 695 L1682 695 Z" fill="#4a4438"/>
<!-- seat -->
<path d="M1500 563 C1510 560 1525 570 1532 600 C1536 620 1534 640 1520 660 L1500 660 Z" fill="#a5a093"/>
<path d="M1600 610 C1615 605 1630 615 1640 640 L1640 695 L1600 695 Z" fill="#a5a093"/>
<!-- hair -->
<path d="M1550 502 C1530 503 1513 514 1509 528 C1507 542 1510 556 1516 564 L1522 562 C1530 560 1540 563 1546 560 C1556 552 1575 542 1596 533 L1604 540 C1608 533 1611 526 1609 518 C1600 506 1578 501 1550 502 Z" fill="#6e6050" stroke="#2a221e" stroke-width="0.8"/>
<path d="M1518 530 C1530 515 1552 508 1578 510 M1526 546 C1542 530 1568 520 1598 522 M1536 556 C1552 540 1575 530 1600 530" fill="none" stroke="#8f806d" stroke-width="1.5"/>
<path d="M1522 548 C1534 532 1555 522 1582 520 M1540 540 C1552 530 1570 525 1590 526" fill="none" stroke="#3e3428" stroke-width="0.9"/>
<!-- face/neck -->
<path d="M1534 590 C1545 605 1560 618 1587 621 L1592 645 L1545 645 Z" fill="#f3c9a0"/>
<path d="M1540 560 C1556 550 1578 538 1600 532 L1605 545 L1605 596 C1601 606 1594 614 1576 621 C1560 618 1548 608 1538 596 C1535 580 1536 568 1540 560 Z" fill="#f5d8b8"/>
<path d="M1516 562 C1524 559 1532 565 1534 575 C1535 585 1531 590 1525 588 C1519 582 1516 572 1516 562 Z" fill="#f0bd8c" stroke="#2a221e" stroke-width="0.7"/>
<path d="M1560 606 C1565 614 1575 618 1590 612" fill="none" stroke="#8a7a6a" stroke-width="1.5" stroke-dasharray="1.5 1"/>
<path d="M1552 562 C1558 559 1566 559 1572 561 M1586 557 C1592 555 1598 555 1602 557" fill="none" stroke="#2a2220" stroke-width="1"/>
<g fill="none" stroke="#2a2220" stroke-width="1.2">
<path d="M1536 567 L1546 566 C1555 566 1575 567 1582 568 L1584 578 C1575 580 1560 580 1550 579 Z"/>
<path d="M1584 570 L1602 567 L1603 577 L1588 578"/>
</g>
<path d="M1568 603 C1574 601 1584 601 1590 602 C1588 608 1580 610 1572 608 Z" fill="#fff" stroke="#3a1a10" stroke-width="0.8"/>
<!-- shirt -->
<path d="M1523 695 L1530 632 L1553 640 L1590 632 L1637 646 L1648 695 Z" fill="#b0aca2" stroke="#2a221e" stroke-width="0.8"/>
<!-- seatbelt -->
<path d="M1604 562 L1614 555 C1620 590 1610 640 1587 695 L1567 695 C1592 640 1606 590 1604 562 Z" fill="#3d3830"/>
<!-- wheel -->
<path d="M1637 660 C1670 630 1700 620 1736 623 L1736 633 C1705 632 1680 645 1660 665 Z" fill="#3d362e" stroke="#1e1814" stroke-width="0.8"/>
<!-- arm & hand -->
<path d="M1588 695 C1598 680 1612 668 1628 660 L1640 690 L1630 695 Z" fill="#f7d6b0" stroke="#2a221e" stroke-width="0.7"/>
<path d="M1626 660 C1636 648 1655 644 1666 648 C1676 652 1682 660 1682 670 C1680 682 1672 690 1660 691 C1645 692 1632 688 1626 680 Z" fill="#f8d8b2" stroke="#2a221e" stroke-width="0.8"/>
<path d="M1662 660 L1678 662 M1662 670 L1680 672 M1660 680 L1676 682" stroke="#d89868" stroke-width="1"/>
<rect x="1735" y="495.5" width="22" height="200" fill="#fff"/>
<path d="M1440 495.5 L1735.5 495.5 L1735.5 695" fill="none" stroke="#2a2a2a" stroke-width="1"/>
</g>
<!-- bubbles -->
<g fill="#fff" stroke="#111" stroke-width="1.1">
<path d="M1608 250 C1580 240 1556 222 1557 200 C1558 175 1580 160 1606 158 C1625 150 1645 147 1662 147 C1705 149 1737 172 1737 199 C1737 222 1718 240 1693 246 C1728 252 1751 282 1752 313 C1752 345 1730 370 1697 379 C1730 390 1754 412 1754 433 C1754 465 1715 490 1662 490 C1610 490 1569 465 1569 433 C1569 410 1585 393 1613 384 C1575 372 1551 345 1551 313 C1551 282 1575 258 1608 250 Z"/>
<path d="M1417 595 C1385 588 1353 568 1353 542 C1353 512 1390 489 1433 489 C1475 489 1510 512 1510 542 C1510 552 1506 562 1500 570 L1507 583 L1494 576 C1485 585 1472 590 1460 593 C1500 603 1536 630 1536 665 C1536 700 1495 720 1445 720 C1395 720 1354 700 1354 662 C1354 630 1385 603 1417 595 Z"/>
</g>
<g font-family="Liberation Sans, sans-serif" fill="#111" stroke="#111" stroke-width="0.45" text-anchor="middle">
<g font-size="13" letter-spacing="0.8" word-spacing="0.5">
<text x="1645.3" y="203">J'AI TELLEMENT</text>
<text x="1647.8" y="218.5">HÂTE !</text>
</g>
<g font-size="11.2" letter-spacing="0.55">
<text x="1651.5" y="296.5">HEUREUSEMENT QUE</text>
<text x="1650.8" y="311">CETTE ANNÉE LES</text>
<text x="1648.6" y="325.5">AFFAIRES ONT ÉTÉ</text>
<text x="1651" y="340">BONNES À LA</text>
<text x="1649" y="355">BOULANGERIE</text>
</g>
<g font-size="11.8" letter-spacing="1">
<text x="1658.6" y="425.2">ÇA M'AVAIT</text>
<text x="1659.2" y="440">MANQUÉ D'ALLER</text>
<text x="1661" y="455.8">EN VACANCES !</text>
</g>
<g font-size="8.5" letter-spacing="0.05" stroke-width="0.3">
<text x="1430.5" y="526">ET COMME C'EST LE</text>
<text x="1432.6" y="536">DERNIER ÉTÉ AVANT QUE LUCAS</text>
<text x="1432.6" y="546">NE PARTE POUR CES ÉTUDES,</text>
<text x="1430.5" y="556">C'EST L'OCCASION DE</text>
<text x="1430.9" y="566">PASSER CES VACANCES</text>
<text x="1431" y="576">TOUS ENSEMBLE</text>
</g>
<g font-size="10.2" letter-spacing="0.3" stroke-width="0.4">
<text x="1442.8" y="634">LE CONNAISSANT, IL</text>
<text x="1442.9" y="646">PRÉFÉRERA PASSER</text>
<text x="1440.6" y="658">SES PROCHAINES</text>
<text x="1442.8" y="670">VACANCES À FAIRE DES</text>
<text x="1440.7" y="682">JOBS D'ÉTÉ, N'EST</text>
<text x="1442" y="693.5">CE PAS?</text>
</g>
</g>
</svg>
</div>
<svg style="position:absolute;left:1269px;top:710px" width="17" height="13" viewBox="0 0 17 13"><rect x="0.6" y="0.6" width="15.8" height="11.8" rx="2.4" fill="none" stroke="#fff" stroke-width="1.15"/><path d="M0.6 9.6h15.8v1a1.8 1.8 0 0 1-1.8 1.8H2.4A1.8 1.8 0 0 1 0.6 10.6z" fill="#fff"/><rect x="3" y="10" width="1.5" height="1.4" fill="#282828"/><rect x="6" y="10" width="1.5" height="1.4" fill="#282828"/><rect x="9" y="10" width="1.5" height="1.4" fill="#282828"/><rect x="12" y="10" width="1.5" height="1.4" fill="#282828"/></svg>
<div style="position:absolute;left:1307px;top:701px;width:1px;height:32px;background:#3a3a3a"></div>
<svg style="position:absolute;left:1328px;top:710px" width="17" height="15" viewBox="0 0 17 15"><path d="M8.5 14L2 7.5A3.8 3.8 0 0 1 8.5 2.2 3.8 3.8 0 0 1 15 7.5z" fill="none" stroke="#8a8a8a" stroke-width="1.1"/></svg>
<svg style="position:absolute;left:1372px;top:709px" width="16" height="16" viewBox="0 0 16 16"><circle cx="7.6" cy="7.6" r="7.1" fill="none" stroke="#fff" stroke-width="1.15"/><path d="M7.6 4.6v6.8" stroke="#fff" stroke-width="1"/><circle cx="7.6" cy="4.6" r="0.75" fill="#fff"/></svg>
<svg style="position:absolute;left:1416px;top:715.5px" width="17" height="5"><path d="M0.25 2.2a1.75 1.75 0 0 1 3.5 0V3.6H0.25zM6.55 2.2a1.75 1.75 0 0 1 3.5 0V3.6H6.55zM12.85 2.2a1.75 1.75 0 0 1 3.5 0V3.6H12.85z" fill="#fff"/></svg>
<svg style="position:absolute;left:1525px;top:710px" width="15" height="15" viewBox="0 0 15 15"><path d="M0.6 4.5V2.6a2 2 0 0 1 2-2h1.9M10.5 0.6h1.9a2 2 0 0 1 2 2v1.9M14.4 10.5v1.9a2 2 0 0 1-2 2h-1.9M4.5 14.4H2.6a2 2 0 0 1-2-2v-1.9" fill="none" stroke="#fff" stroke-width="1.1"/><circle cx="7.5" cy="7.5" r="1.5" fill="none" stroke="#fff" stroke-width="1"/><path d="M3.5 3.5h2M4.5 2.5v2" stroke="#fff" stroke-width="0.9"/></svg>
<svg style="position:absolute;left:1569px;top:710px" width="15" height="15" viewBox="0 0 15 15"><path d="M0.6 4.5V2.6a2 2 0 0 1 2-2h1.9M10.5 0.6h1.9a2 2 0 0 1 2 2v1.9M14.4 10.5v1.9a2 2 0 0 1-2 2h-1.9M4.5 14.4H2.6a2 2 0 0 1-2-2v-1.9" fill="none" stroke="#fff" stroke-width="1.1"/><path d="M4 5h7M4 7.5h7M4 10h4.5" stroke="#fff" stroke-width="1"/></svg>
<svg style="position:absolute;left:1630px;top:711px" width="17" height="13" viewBox="0 0 17 13"><rect x="0.6" y="0.6" width="15.8" height="11.8" rx="1" fill="none" stroke="#fff" stroke-width="1.2"/><path d="M3 3.5v-1h2M12 2.5h2v1M14 9.5v1h-2M5 10.5H3v-1" fill="none" stroke="#fff" stroke-width="0.9"/><circle cx="8.5" cy="6.5" r="2.8" fill="#fff"/></svg>
<div style="position:absolute;left:1660px;top:701px;width:88px;height:30px;background:#323232;border:1px solid #383838;border-radius:5px">
<div class="t" style="position:absolute;left:11px;top:7px;font:14px 'Liberation Sans',sans-serif;color:#dcdcdc;letter-spacing:-0.9px;word-spacing:1px;white-space:nowrap">51 %</div></div>
<svg style="position:absolute;left:1726px;top:714px" width="10" height="6" viewBox="0 0 10 6"><path d="M0.5 0.5l4.5 4.5 4.5-4.5" fill="none" stroke="#cfcfcf" stroke-width="1"/></svg>
<svg style="position:absolute;left:1764px;top:715.5px" width="17" height="5"><path d="M0.25 2.2a1.75 1.75 0 0 1 3.5 0V3.6H0.25zM6.55 2.2a1.75 1.75 0 0 1 3.5 0V3.6H6.55zM12.85 2.2a1.75 1.75 0 0 1 3.5 0V3.6H12.85z" fill="#fff"/></svg>
<div style="position:absolute;left:1800px;top:701px;width:1px;height:32px;background:#3a3a3a"></div>
<svg style="position:absolute;left:1823px;top:709px" width="16" height="16" viewBox="0 0 16 16"><path d="M1.5 14.5l13-13M9 1.2h5.8V7M1.2 9v5.8H7" fill="none" stroke="#fff" stroke-width="1.1"/></svg>
</body></html>
